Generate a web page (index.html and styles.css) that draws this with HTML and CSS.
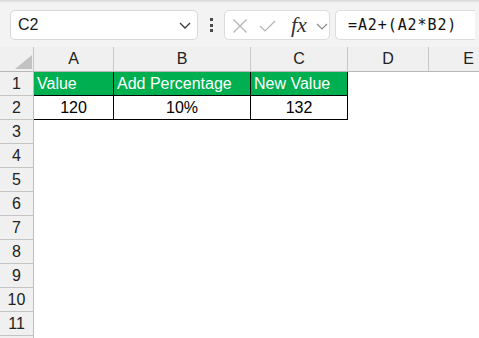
FILE: index.html
```html
<!DOCTYPE html>
<html>
<head>
<meta charset="utf-8">
<link rel="stylesheet" href="styles.css">
</head>
<body>
<div class="toolbar">
  <div class="namebox">
    <span class="ref">C2</span>
    <svg class="chev" width="12" height="7" viewBox="0 0 12 7"><path d="M1 1 L6 6 L11 1" fill="none" stroke="#3a3a3a" stroke-width="1.3"/></svg>
  </div>
  <div class="dots"><i></i><i></i><i></i></div>
  <div class="fxbox">
    <svg class="icon-x" width="16" height="16" viewBox="0 0 16 16"><path d="M1.5 1.5 L14.5 14.5 M14.5 1.5 L1.5 14.5" fill="none" stroke="#b3b3b3" stroke-width="1.2"/></svg>
    <svg class="icon-check" width="17" height="12" viewBox="0 0 17 12"><path d="M1 6 L6 11 L16 1" fill="none" stroke="#b3b3b3" stroke-width="1.2"/></svg>
    <span class="fx">fx</span>
    <svg class="chev2" width="12" height="7" viewBox="0 0 12 7"><path d="M1 1 L6 6 L11 1" fill="none" stroke="#8a8a8a" stroke-width="1.2"/></svg>
  </div>
  <div class="formula">=A2+(A2*B2)</div>
</div>
<div class="viewport">
<div class="sheet">
  <div class="corner"><svg width="17" height="14" viewBox="0 0 17 14"><polygon points="17,0 17,14 0,14" fill="#c2c2c2"/></svg></div>
  <div class="ch">A</div><div class="ch">B</div><div class="ch">C</div><div class="ch">D</div><div class="ch">E</div>

  <div class="rh">1</div>
  <div class="c g">Value</div><div class="c g">Add Percentage</div><div class="c g">New Value</div><div class="e"></div><div class="e"></div>

  <div class="rh">2</div>
  <div class="c n">120</div><div class="c n">10%</div><div class="c n">132</div><div class="e"></div><div class="e"></div>

  <div class="rh">3</div><div class="e"></div><div class="e"></div><div class="e"></div><div class="e"></div><div class="e"></div>
  <div class="rh">4</div><div class="e"></div><div class="e"></div><div class="e"></div><div class="e"></div><div class="e"></div>
  <div class="rh">5</div><div class="e"></div><div class="e"></div><div class="e"></div><div class="e"></div><div class="e"></div>
  <div class="rh">6</div><div class="e"></div><div class="e"></div><div class="e"></div><div class="e"></div><div class="e"></div>
  <div class="rh">7</div><div class="e"></div><div class="e"></div><div class="e"></div><div class="e"></div><div class="e"></div>
  <div class="rh">8</div><div class="e"></div><div class="e"></div><div class="e"></div><div class="e"></div><div class="e"></div>
  <div class="rh">9</div><div class="e"></div><div class="e"></div><div class="e"></div><div class="e"></div><div class="e"></div>
  <div class="rh">10</div><div class="e"></div><div class="e"></div><div class="e"></div><div class="e"></div><div class="e"></div>
  <div class="rh">11</div><div class="e"></div><div class="e"></div><div class="e"></div><div class="e"></div><div class="e"></div>
  <div class="rh"></div><div class="e"></div><div class="e"></div><div class="e"></div><div class="e"></div><div class="e"></div>
</div>
</div>
</body>
</html>
```

FILE: styles.css
```css
* { box-sizing: border-box; }
html, body {
  margin: 0;
  padding: 0;
  width: 479px;
  height: 338px;
  overflow: hidden;
  background: #ffffff;
  font-family: "Liberation Sans", Arial, sans-serif;
  color: #000;
}
.toolbar {
  height: 47px;
  width: 479px;
  overflow: hidden;
  display: flex;
  align-items: flex-start;
  padding: 10px 0 0 10px;
  background: linear-gradient(#d4d4d4 0px, #ebebeb 2px, #f3f3f3 4px, #f3f3f3 100%);
}
.namebox {
  flex: none;
  width: 188px;
  height: 30px;
  background: #fff;
  border: 1px solid #d8d8d8;
  border-radius: 5px;
  display: flex;
  align-items: center;
  justify-content: space-between;
  padding: 0 6px 0 7px;
}
.ref {
  font-size: 16px;
  color: #1a1a1a;
}
.chev { display: block; margin-top: 1px; }
.dots {
  flex: none;
  width: 26px;
  height: 30px;
  display: flex;
  flex-direction: column;
  align-items: center;
  justify-content: center;
  gap: 2.5px;
}
.dots i {
  display: block;
  width: 3px;
  height: 3px;
  background: #4a4a4a;
}
.fxbox {
  flex: none;
  width: 106px;
  height: 30px;
  background: #fff;
  border: 1px solid #dcdcdc;
  border-radius: 5px;
  display: flex;
  align-items: center;
  padding: 0 1px 0 7px;
}
.icon-x { display: block; margin-top: 2px; }
.icon-check { display: block; margin-left: 11px; margin-top: 2px; }
.fx {
  margin-left: 15px;
  font-family: "Liberation Serif", "Times New Roman", serif;
  font-style: italic;
  font-size: 22px;
  line-height: 22px;
  color: #333;
}
.chev2 { display: block; margin-left: auto; margin-top: 2px; }
.formula {
  flex: none;
  width: 140px;
  height: 30px;
  margin-left: 5px;
  background: #fff;
  border: 1px solid #dcdcdc;
  border-right: none;
  border-radius: 5px 0 0 5px;
  padding-left: 12px;
  font-family: "DejaVu Sans Mono", monospace;
  font-size: 15px;
  letter-spacing: 0.9px;
  line-height: 28px;
  white-space: nowrap;
  color: #111;
}
.viewport {
  width: 479px;
  height: 291px;
  overflow: hidden;
}
.sheet {
  display: grid;
  width: 509px;
  grid-template-columns: 34px 80px 137px 97px 81px 80px;
  grid-template-rows: 25px repeat(12, 24px);
  font-size: 16px;
}
.corner {
  background: #f0f0f0;
  border-right: 1px solid #c4c4c4;
  border-bottom: 1px solid #b8b8b8;
  display: flex;
  justify-content: flex-end;
  align-items: flex-end;
  padding: 0 1px 2px 0;
}
.corner svg { display: block; }
.ch {
  background: #f0f0f0;
  border-right: 1px solid #c8c8c8;
  border-bottom: 1px solid #b8b8b8;
  text-align: center;
  line-height: 24px;
  color: #222;
}
.rh {
  background: #f0f0f0;
  border-right: 1px solid #bdbdbd;
  border-bottom: 1px solid #c4c4c4;
  text-align: center;
  line-height: 23px;
  color: #222;
}
.e { background: #fff; }
.c {
  border-right: 1px solid #000;
  border-bottom: 1px solid #000;
  line-height: 23px;
  white-space: nowrap;
  overflow: hidden;
}
.g {
  background: #00b050;
  color: #fff;
  padding-left: 3px;
}
.n {
  background: #fff;
  text-align: center;
}
```
